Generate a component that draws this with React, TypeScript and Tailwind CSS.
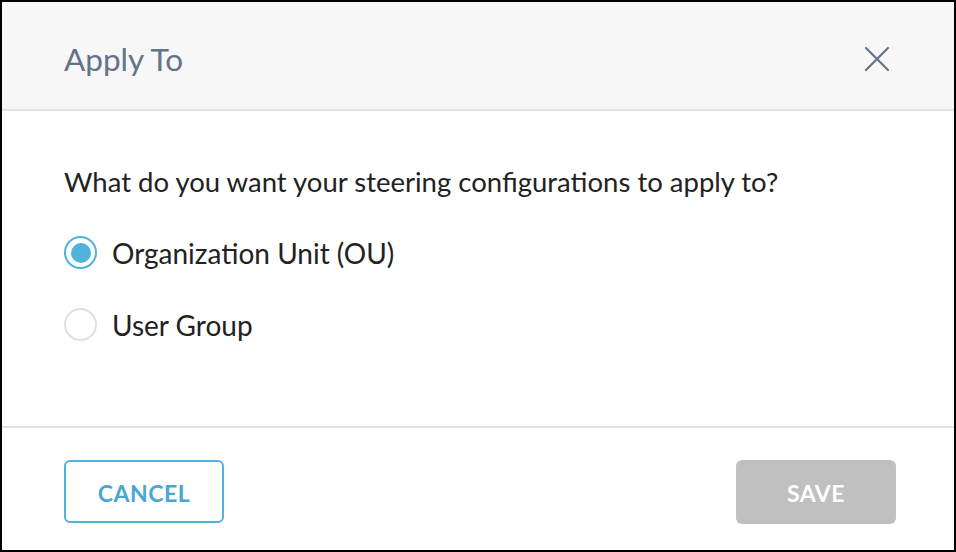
import { useState } from "react";

const options = [
  { id: "ou", label: "Organization Unit (OU)" },
  { id: "group", label: "User Group" },
];

const App = () => {
  const [selected, setSelected] = useState("ou");

  return (
    <div className="w-[956px] h-[552px] border-2 border-black bg-white flex flex-col font-['Lato','Liberation_Sans',sans-serif]">
      <div className="h-[109px] bg-[#f7f7f7] border-b-2 border-[#e2e2e2] flex items-center justify-between pl-[62px] pr-[64px] shrink-0">
        <h2 className="text-[31.5px] leading-[40px] text-[#637389] mt-[6px]">Apply To</h2>
        <button className="text-[#637389] mt-[6px]">
          <svg width="26" height="26" viewBox="0 0 26 26" fill="none" stroke="currentColor" strokeWidth="2.2" strokeLinecap="round">
            <path d="M2 2L24 24M24 2L2 24" />
          </svg>
        </button>
      </div>

      <div className="flex-1 pl-[62px] pt-[56px]">
        <p className="text-[27.5px] text-[#222] leading-[30px]">
          What do you want your steering configurations to apply to?
        </p>
        <div className="mt-[39px] flex flex-col gap-[39px]">
          {options.map((opt) => (
            <label
              key={opt.id}
              className="flex items-center gap-[15px] cursor-pointer"
              onClick={() => setSelected(opt.id)}
            >
              {selected === opt.id ? (
                <span className="w-[33px] h-[33px] rounded-full border-2 border-[#4fb3dc] flex items-center justify-center">
                  <span className="w-[20px] h-[20px] rounded-full bg-[#4fb3dc]" />
                </span>
              ) : (
                <span className="w-[33px] h-[33px] rounded-full border-2 border-[#e0e0e0]" />
              )}
              <span className="text-[28px] text-[#222] leading-[32px]">{opt.label}</span>
            </label>
          ))}
        </div>
      </div>

      <div className="h-[124px] border-t-2 border-[#e2e2e2] flex items-center justify-between pl-[62px] pr-[58px] pt-[5px] shrink-0">
        <button className="w-[160px] h-[63px] rounded-[6px] border-2 border-[#4fb3dc] text-[#4aa6d4] font-bold text-[23px] tracking-[0.5px] pt-[3px]">
          CANCEL
        </button>
        <button className="w-[160px] h-[64px] rounded-[6px] bg-[#c0c0c0] text-white font-bold text-[23px] tracking-[0.5px] pt-[3px]">
          SAVE
        </button>
      </div>
    </div>
  );
};

export default App;
